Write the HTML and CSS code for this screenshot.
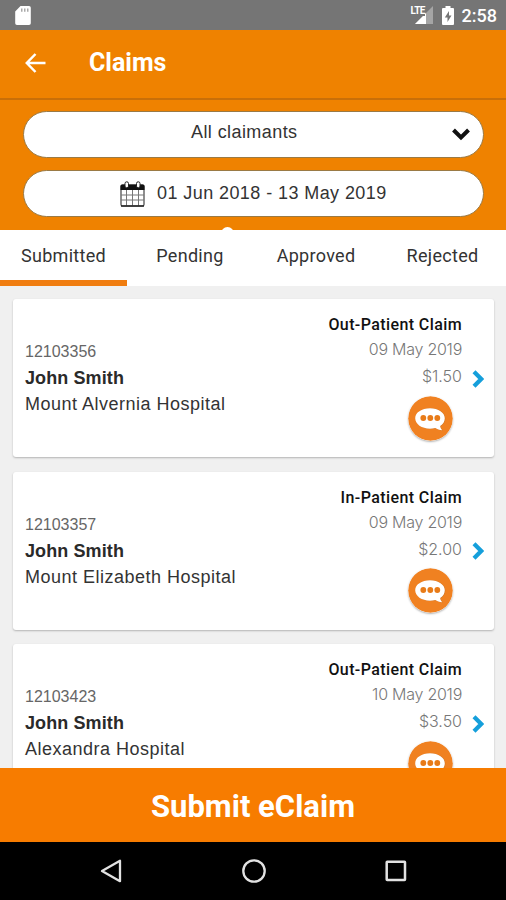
FILE: index.html
```html
<!DOCTYPE html>
<html lang="en">
<head>
<meta charset="utf-8">
<title>Claims</title>
<link rel="stylesheet" href="styles.css">
</head>
<body>
<svg class="defs" width="0" height="0" aria-hidden="true">
  <symbol id="chat" viewBox="0 0 45 45">
    <circle cx="22.5" cy="22.5" r="22.3" fill="#f08121"/>
    <path d="M22.5 12.2c8.400 0 14.800 4.400 14.800 10.300 0 3.200-1.700 5.900-4.600 7.700.2 1.700.8 3 2.100 4.300-3-.2-5.200-1-7-2.200-1.700.4-3.400.6-5.300.6-8.400 0-14.800-4.600-14.800-10.400S14.100 12.200 22.500 12.200z" fill="#9c5a20" opacity=".45"/>
    <path d="M22 12.200c8.400 0 14.800 4.400 14.800 10.100 0 3.200-1.700 5.900-4.600 7.700.2 1.700.8 3 2.100 4.300-3-.2-5.200-1-7-2.200-1.700.4-3.400.6-5.300.6-8.400 0-14.800-4.600-14.800-10.400S13.600 12.200 22 12.200z" fill="#fff"/>
    <g fill="#e87b18"><circle cx="15.300" cy="22" r="2.900"/><circle cx="22.300" cy="22" r="2.900"/><circle cx="29.300" cy="22" r="2.900"/></g>
  </symbol>
  <symbol id="next" viewBox="0 0 12 18">
    <path d="M2 1.800l7.200 7.200L2 16.200" fill="none" stroke="#159fdb" stroke-width="4.200"/>
  </symbol>
</svg>
<div class="screen">
  <div class="status">
    <svg class="sd" width="16" height="19" viewBox="0 0 16 19"><path d="M5.500 0H14a1.800 1.800 0 0 1 1.800 1.800v15.400A1.800 1.800 0 0 1 14 19H2a1.800 1.800 0 0 1-1.800-1.800V5.500z" fill="#fff"/><path d="M6 2.500h1.500v3.200H6zM9 2.500h1.500v3.200H9zM12 2.500h1.500v3.200H12z" fill="#aaa"/></svg>
    <div class="signal">
      <span class="lte">LTE</span>
      <svg width="18" height="18" viewBox="0 0 18 18"><path d="M0 18L18 0v18z" fill="#a5a5a5"/><path d="M0 18L11 7v11z" fill="#fff"/></svg>
    </div>
    <svg class="battery" width="12" height="19" viewBox="0 0 12 19"><path d="M3.500 0h5v2H11q1 0 1 1v15q0 1-1 1H1q-1 0-1-1V3q0-1 1-1h2.500z" fill="#fff"/><path d="M7 5L2.800 11.500h2.700V16l4-6.500H7z" fill="#757575"/></svg>
    <span class="time">2:58</span>
  </div>
  <header class="appbar">
    <svg class="back" width="22" height="20" viewBox="0 0 22 20"><path d="M10.500 1L1.800 10l8.700 9M2 10h18.500" fill="none" stroke="#fff" stroke-width="2.500"/></svg>
    <h1>Claims</h1>
  </header>
  <section class="filters">
    <div class="pill claimant"><span>All claimants</span>
      <svg class="down" width="18" height="13" viewBox="0 0 18 13"><path d="M1.500 2l7.500 7.500L16.500 2" fill="none" stroke="#111" stroke-width="4"/></svg>
    </div>
    <div class="pill dates">
      <svg width="25" height="26" viewBox="0 0 25 26">
        <rect x="1" y="4" width="23" height="21" rx="1.500" fill="#fff" stroke="#444" stroke-width="1.200"/>
        <path d="M.5 9V5q0-1.500 1.500-1.500h21q1.500 0 1.500 1.500v4z" fill="#111"/>
        <path d="M1 14h23M1 19h23M6.500 9v16M12.500 9v16M18.500 9v16" stroke="#777" stroke-width="1"/>
        <path d="M1 25h23" stroke="#222" stroke-width="1.500"/>
        <rect x="5" y=".8" width="3.500" height="6" rx="1.700" fill="#fff" stroke="#222"/><rect x="16.500" y=".8" width="3.500" height="6" rx="1.700" fill="#fff" stroke="#222"/>
      </svg>
      <span>01 Jun 2018 - 13 May 2019</span>
    </div>
    <i class="notch"></i>
  </section>
  <nav class="tabs">
    <span class="tab active">Submitted</span><span class="tab">Pending</span><span class="tab">Approved</span><span class="tab">Rejected</span>
  </nav>
  <main class="list">
    <article class="card">
      <div class="who"><span class="num">12103356</span><strong>John Smith</strong><span class="place">Mount Alvernia Hospital</span></div>
      <div class="info"><b>Out-Patient Claim</b><span class="date">09 May 2019</span><span class="sum">$1.50</span><svg class="chat"><use href="#chat"/></svg></div>
      <svg class="next"><use href="#next"/></svg>
    </article>
    <article class="card">
      <div class="who"><span class="num">12103357</span><strong>John Smith</strong><span class="place">Mount Elizabeth Hospital</span></div>
      <div class="info"><b>In-Patient Claim</b><span class="date">09 May 2019</span><span class="sum">$2.00</span><svg class="chat"><use href="#chat"/></svg></div>
      <svg class="next"><use href="#next"/></svg>
    </article>
    <article class="card">
      <div class="who"><span class="num">12103423</span><strong>John Smith</strong><span class="place">Alexandra Hospital</span></div>
      <div class="info"><b>Out-Patient Claim</b><span class="date">10 May 2019</span><span class="sum">$3.50</span><svg class="chat"><use href="#chat"/></svg></div>
      <svg class="next"><use href="#next"/></svg>
    </article>
  </main>
  <div class="submit">Submit eClaim</div>
  <footer class="sysnav">
    <svg width="22" height="24" viewBox="0 0 22 24"><path d="M20 1.800v20.400L2 12z" fill="none" stroke="#e2e2e2" stroke-width="2.300" stroke-linejoin="round"/></svg>
    <svg width="26" height="26" viewBox="0 0 26 26"><circle cx="13" cy="13" r="10.700" fill="none" stroke="#e2e2e2" stroke-width="2.300"/></svg>
    <svg width="22" height="22" viewBox="0 0 22 22"><rect x="1.700" y="1.700" width="18.300" height="18.300" rx=".5" fill="none" stroke="#e2e2e2" stroke-width="2.500"/></svg>
  </footer>
</div>
</body>
</html>
```
FILE: styles.css
```css
* { box-sizing: border-box; }
body { margin: 0; }
.defs { display: block; }
svg { flex: none; display: block; }
.screen { width: 506px; height: 900px; display: flex; flex-direction: column; overflow: hidden; font-family: "Liberation Sans", Arial, sans-serif; white-space: nowrap; }
.status { height: 30px; flex: none; background: #757575; display: flex; align-items: flex-start; padding: 6px 9px 0 15px; color: #fff; }
.signal { position: relative; margin-left: auto; margin-right: 9px; width: 22px; display: flex; justify-content: flex-end; }
.lte { position: absolute; left: 0; top: -1px; font: 700 10px/11px Roboto, sans-serif; letter-spacing: -.6px; background: #757575; height: 11px; }
.battery { margin-right: 8px; }
.time { font: 500 18px/19px Roboto, sans-serif; }
.appbar { height: 70px; flex: none; background: #ef8200; border-bottom: 2px solid #c96f08; display: flex; align-items: center; padding: 0 25px 2px; }
.appbar h1 { margin: 0 0 0 42px; font: 700 25px/30px Roboto, sans-serif; color: #fff; }
.filters { position: relative; height: 130px; flex: none; background: #ef8200; padding: 11px 22px 0 23px; display: flex; flex-direction: column; gap: 12px; }
.pill { height: 47px; border: 1px solid #9a7a45; border-radius: 24px; background: #fff; display: flex; align-items: center; color: #333; font-size: 18px; }
.claimant { padding: 0 13px 0 167px; justify-content: space-between; }
.claimant span { padding-bottom: 4px; letter-spacing: .42px; }
.dates { padding-left: 96px; gap: 12px; }
.dates span { letter-spacing: .42px; }
.notch { position: absolute; left: 221px; bottom: -4px; width: 13px; height: 7px; border-radius: 7px 7px 0 0; background: #fff; }
.tabs { height: 56px; flex: none; display: grid; grid-template-columns: 127px 126px 126px 127px; background: #fff; }
.tab { text-align: center; font: 400 18px/52px Roboto, sans-serif; letter-spacing: .3px; color: #333; }
.active { box-shadow: inset 0 -6px #f07d10; }
.list { flex: 1; min-height: 0; overflow: hidden; background: #f0f0f0; padding: 13px 12px 0 13px; display: flex; flex-direction: column; gap: 14.500px; }
.card { height: 158px; flex: none; background: #fff; border-radius: 3px; box-shadow: 0 1px 2px rgba(0,0,0,.25); display: flex; padding: 0 10px 0 12px; }
.who { display: flex; flex-direction: column; padding-top: 39px; line-height: 26px; font-size: 18px; color: #333; }
.num { font-size: 16px; line-height: 27px; color: #666; }
.who strong { color: #2a2a2a; letter-spacing: .1px; }
.place { letter-spacing: .5px; }
.info { margin-left: auto; display: flex; flex-direction: column; align-items: flex-end; padding-top: 13px; }
.info b { font: 500 16px/25px Roboto, sans-serif; color: #111; letter-spacing: .4px; }
.date, .sum { font: 300 16px/25px Inter, sans-serif; color: #777; }
.date { letter-spacing: -.25px; }
.sum { line-height: 29px; }
.chat { width: 45px; height: 45px; margin: 4.500px 9px 0 0; border-radius: 50%; box-shadow: 0 1px 2px rgba(0,0,0,.3); }
.next { width: 12px; height: 18px; margin: 70.500px 0 0 10px; }
.submit { height: 74px; flex: none; background: #f77c00; color: #fff; text-align: center; font: 700 31px/77px Roboto, sans-serif; }
.sysnav { height: 58px; flex: none; background: #000; display: flex; justify-content: space-between; align-items: center; padding: 0 99px 0 100px; }
```
